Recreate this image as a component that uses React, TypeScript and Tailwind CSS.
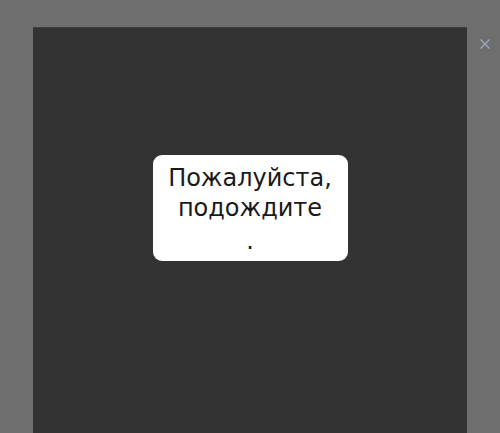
export default function App() {
  return (
    <div className="relative w-[500px] h-[433px] overflow-hidden bg-[#6e6e6e]">
      {/* close button */}
      <button className="absolute left-[479px] top-[38px] w-[12px] h-[12px] flex items-center justify-center">
        <svg width="12" height="12" viewBox="0 0 12 12">
          <path d="M1.5 1.5 L10.5 10.5 M10.5 1.5 L1.5 10.5" stroke="#a3a6c2" strokeWidth="1.3" />
        </svg>
      </button>

      <div className="absolute left-[33px] top-[27px] w-[434px] h-[420px] bg-[#333333] border-t border-[#3d3d3d]">
        <div className="flex justify-center pt-[127px]">
          <div
            className="w-[195px] h-[106px] rounded-[9px] bg-white px-[10px] pt-[9px] text-center text-[24px] leading-[29.5px] text-[#1a1a1a]"
            style={{ fontFamily: '"DejaVu Sans", sans-serif' }}
          >
            <p>Пожалуйста, подождите</p>
            <p className="mt-[4px]">.</p>
          </div>
        </div>
      </div>
    </div>
  )
}
